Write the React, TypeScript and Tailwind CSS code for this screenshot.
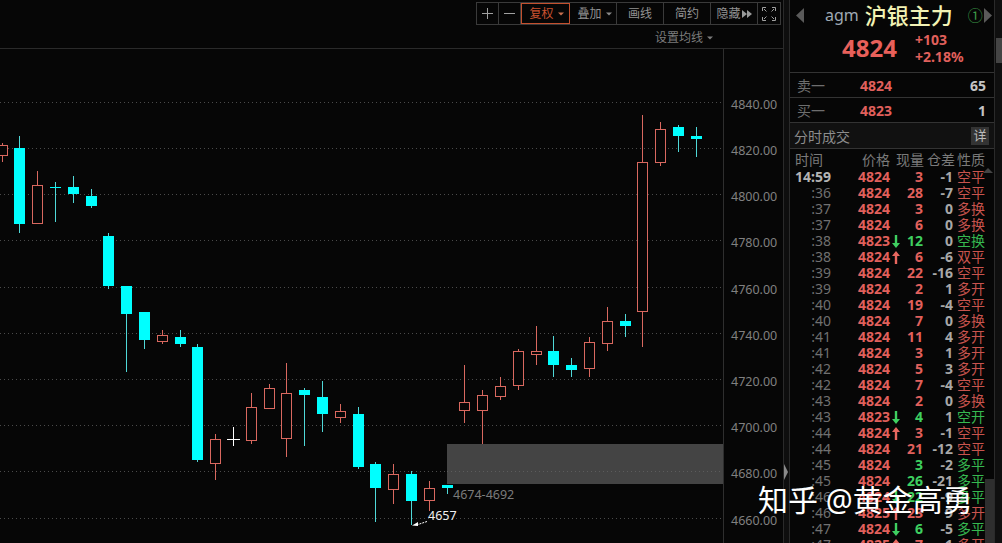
import React from "react";

// [x, open-top y, body-bottom y, wick-top y, wick-bottom y, colour]
type Candle = [number, number, number, number, number, "r" | "c"];

const candles: Candle[] = [
  [2.5, 145, 155, 143, 162, "r"],
  [19.5, 148, 224, 136, 233, "c"],
  [37.5, 185, 223, 171, 224, "r"],
  [55.5, 187, 188, 182, 222, "c"],
  [73.5, 187, 194, 176, 203, "c"],
  [91.5, 196, 206, 189, 208, "c"],
  [108.5, 236, 286, 233, 289, "c"],
  [126.5, 286, 314, 286, 372, "c"],
  [144.5, 312, 340, 312, 349, "c"],
  [162.5, 335, 341, 330, 344, "r"],
  [180.5, 337, 344, 330, 347, "c"],
  [197.5, 347, 460, 344, 462, "c"],
  [215.5, 439, 463, 434, 480, "r"],
  [251.5, 407, 440, 393, 444, "r"],
  [269.5, 388, 408, 384, 408, "r"],
  [286.5, 393, 438, 363, 457, "r"],
  [304.5, 390, 395, 388, 446, "c"],
  [322.5, 397, 414, 381, 432, "c"],
  [340.5, 411, 417, 404, 423, "r"],
  [358.5, 414, 467, 407, 469, "c"],
  [375.5, 464, 488, 462, 522, "c"],
  [393.5, 474, 489, 464, 504, "r"],
  [411.5, 474, 501, 471, 525, "c"],
  [429.5, 488, 500, 481, 511, "r"],
  [447.5, 485, 488, 485, 494, "c"],
  [464.5, 402, 410, 365, 423, "r"],
  [482.5, 395, 410, 390, 444, "r"],
  [500.5, 386, 396, 377, 400, "r"],
  [518.5, 351, 385, 349, 390, "r"],
  [536.5, 351, 354, 326, 365, "r"],
  [553.5, 351, 365, 336, 377, "c"],
  [571.5, 365, 370, 358, 377, "c"],
  [589.5, 342, 368, 337, 377, "r"],
  [607.5, 321, 343, 307, 351, "r"],
  [625.5, 321, 326, 314, 337, "c"],
  [642.5, 162, 311, 115, 347, "r"],
  [660.5, 129, 162, 122, 166, "r"],
  [678.5, 127, 136, 125, 152, "c"],
  [696.5, 136, 139, 127, 157, "c"],
];

const gridYs = [102.5, 148.5, 194.5, 240.5, 287.5, 333.5, 379.5, 425.5, 471.5, 518.5];
const axisLabels = ["4840.00", "4820.00", "4800.00", "4780.00", "4760.00", "4740.00", "4720.00", "4700.00", "4680.00", "4660.00"];

// time, price, arrow, qty, diff, type, green?
type Trade = [string, string, "" | "u" | "d", string, string, string, boolean];

const trades: Trade[] = [
  ["14:59", "4824", "", "3", "-1", "空平", false],
  [":36", "4824", "", "28", "-7", "空平", false],
  [":37", "4824", "", "3", "0", "多换", false],
  [":37", "4824", "", "6", "0", "多换", false],
  [":38", "4823", "d", "12", "0", "空换", true],
  [":38", "4824", "u", "6", "-6", "双平", false],
  [":39", "4824", "", "22", "-16", "空平", false],
  [":39", "4824", "", "2", "1", "多开", false],
  [":40", "4824", "", "19", "-4", "空平", false],
  [":40", "4824", "", "7", "0", "多换", false],
  [":41", "4824", "", "11", "4", "多开", false],
  [":41", "4824", "", "3", "1", "多开", false],
  [":42", "4824", "", "5", "3", "多开", false],
  [":42", "4824", "", "7", "-4", "空平", false],
  [":43", "4824", "", "2", "0", "多换", false],
  [":43", "4823", "d", "4", "1", "空开", true],
  [":44", "4824", "u", "3", "-1", "空平", false],
  [":44", "4824", "", "21", "-12", "空平", false],
  [":45", "4824", "", "3", "-2", "多平", true],
  [":45", "4824", "", "26", "-21", "多平", true],
  [":46", "4824", "d", "22", "-9", "多平", true],
  [":46", "4825", "u", "23", "9", "多开", false],
  [":47", "4824", "d", "6", "-5", "多平", true],
  [":47", "4825", "u", "7", "1", "多开", false],
];

function Caret({ color = "#8a8a8a" }: { color?: string }) {
  return (
    <svg width="6" height="4" viewBox="0 0 6 4" className="ml-[4px]">
      <path d="M0 0.5h6L3 3.5z" fill={color} />
    </svg>
  );
}

function Toolbar() {
  const cell = "flex h-full items-center justify-center border-r border-[#3a3a3a] text-[12px] text-[#929292]";
  return (
    <div className="flex h-[26px] shrink-0 justify-end pt-[2px] pr-[2px]">
      <div className="flex h-[23px] border border-[#3a3a3a]">
        <div className={`${cell} w-[22px]`}>
          <svg width="11" height="11" viewBox="0 0 11 11"><path d="M5.5 0v11M0 5.5h11" stroke="#a0a0a0" /></svg>
        </div>
        <div className={`${cell} w-[22px]`}>
          <svg width="11" height="11" viewBox="0 0 11 11"><path d="M0 5.5h11" stroke="#a0a0a0" /></svg>
        </div>
        <div className="flex h-full w-[49px] items-center justify-center border border-[#c4502e] pl-[2px] text-[12px] text-[#c9512f]">
          复权
          <Caret color="#c9704f" />
        </div>
        <div className={`${cell} w-[47px] pl-[3px]`}>
          叠加
          <Caret />
        </div>
        <div className={`${cell} w-[47px]`}>画线</div>
        <div className={`${cell} w-[47px]`}>简约</div>
        <div className={`${cell} w-[47px]`}>
          隐藏
          <svg width="10" height="8" viewBox="0 0 10 8" className="ml-[1px]"><path d="M0 0l5 4-5 4zM5 0l5 4-5 4z" fill="#9a9a9a" /></svg>
        </div>
        <div className="flex h-full w-[22px] items-center justify-center">
          <svg width="14" height="14" viewBox="0 0 14 14" fill="none" stroke="#a0a0a0">
            <path d="M0.5 4V0.5H4M10 0.5h3.5V4M13.5 10v3.5H10M4 13.5H0.5V10M2 2l2.5 2.5M12 2L9.5 4.5M12 12L9.5 9.5M2 12l2.5-2.5" />
          </svg>
        </div>
      </div>
    </div>
  );
}

function Chart() {
  return (
    <svg viewBox="0 49 783 494" className="block h-[494px] w-[783px] shrink-0">
      {gridYs.map((y) => (
        <line key={y} x1="0" x2="723" y1={y} y2={y} stroke="#4a4a4a" strokeDasharray="1 3" />
      ))}
      <rect x="447" y="444" width="276" height="40" fill="#444444" />
      <line x1="447" x2="723" y1="471.5" y2="471.5" stroke="#5c5c5c" strokeDasharray="1 3" />
      <line x1="723.5" x2="723.5" y1="49" y2="543" stroke="#2e2e2e" />
      {candles.map(([x, top, bottom, high, low, c]) => {
        const color = c === "r" ? "#d9685f" : "#00ffff";
        return (
          <g key={x}>
            <line x1={x} x2={x} y1={high} y2={low} stroke={c === "r" ? "#d9685f" : "#4fd8d8"} />
            {c === "r" ? (
              <rect x={x - 5} y={top + 0.5} width="10" height={bottom - top} fill="#060606" stroke={color} />
            ) : (
              <rect x={x - 5.5} y={top} width="11" height={bottom - top} fill={color} />
            )}
          </g>
        );
      })}
      <path d="M233.5 427v19M227 439.5h13" stroke="#ffffff" />
      <path d="M427 521.5l-9 3" stroke="#ffffff" strokeDasharray="2 1" />
      <path d="M412 525.5l6-3.5v4z" fill="#ffffff" />
      <text x="453" y="499" fontSize="12.5" fill="#7b7b7b">4674-4692</text>
      <text x="428" y="520" fontSize="12.5" fill="#f0f0f0">4657</text>
      {axisLabels.map((label, i) => (
        <text key={label} x="731" y={gridYs[i] + 6.5} fontSize="12.5" fill="#808080">{label}</text>
      ))}
    </svg>
  );
}

function TradeArrow({ dir }: { dir: "u" | "d" }) {
  const color = dir === "u" ? "#e8675f" : "#3ecf60";
  return (
    <svg width="8" height="13" viewBox="0 0 8 13" className={dir === "u" ? "" : "rotate-180"}>
      <path d="M4 0L8 5H5.2V13H2.8V5H0z" fill={color} />
    </svg>
  );
}

function TradeRow({ t, first }: { t: Trade; first: boolean }) {
  const [time, price, arrow, qty, diff, kind, green] = t;
  return (
    <div className="grid h-[16px] grid-cols-[41px_59px_11px_22px_30px_1fr] items-center text-[14px] leading-[16px] font-bold">
      <span className={`text-right whitespace-nowrap ${first ? "text-[#b4b4b4]" : "font-normal text-[#707070]"}`}>{time}</span>
      <span className="text-right text-[#e0605c]">{price}</span>
      <span className="flex justify-center">{arrow && <TradeArrow dir={arrow} />}</span>
      <span className={`justify-self-end ${green ? "text-[#3ecf60]" : "text-[#e0605c]"}`}>{qty}</span>
      <span className="justify-self-end text-[#a8a8a8]">{diff}</span>
      <span className={`pl-[4px] font-normal ${green ? "text-[#36b850]" : "text-[#c8544e]"}`}>{kind}</span>
    </div>
  );
}

function QuoteRow({ label, price, size }: { label: string; price: string; size: string }) {
  return (
    <div className="flex h-[25px] shrink-0 items-center border-b border-[#333333] pr-[8px] pl-[7px] text-[14px]">
      <span className="w-[63px] text-[#6e6e6e]">{label}</span>
      <span className="font-bold text-[#e0605c]">{price}</span>
      <span className="ml-auto font-bold text-[#c4c4c4]">{size}</span>
    </div>
  );
}

function SidePanel() {
  return (
    <div className="flex h-full w-[212px] overflow-hidden">
      <div className="flex w-[205px] flex-col border-r border-[#2a2a2a]">
        <div className="h-[73px] shrink-0 border-b border-[#333333]">
          <div className="flex h-[30px] items-center pl-[6px]">
            <svg width="8" height="15" viewBox="0 0 8 15"><path d="M8 0v15L0 7.5z" fill="#5a5a5a" /></svg>
            <span className="ml-[21px] text-[16px] text-[#9fa9b3]">agm</span>
            <span className="ml-[6px] text-[22px] leading-none font-medium text-[#f2f2b4]">沪银主力</span>
            <span className="ml-[15px] text-[15px] leading-none text-[#3c9a46]">①</span>
            <svg width="8" height="15" viewBox="0 0 8 15" className="ml-[1px]"><path d="M0 0v15l8-7.5z" fill="#5a5a5a" /></svg>
          </div>
          <div className="flex items-center pl-[52px]">
            <span className="text-[24px] leading-[36px] font-bold text-[#e8605a]">4824</span>
            <div className="ml-[18px] flex flex-col text-[14px] leading-[17px] font-bold text-[#e0605c]">
              <span>+103</span>
              <span>+2.18%</span>
            </div>
          </div>
        </div>
        <QuoteRow label="卖一" price="4824" size="65" />
        <QuoteRow label="买一" price="4823" size="1" />
        <div className="flex h-[26px] shrink-0 items-center justify-between border-b border-[#333333] bg-[#111111] pt-[1px] pr-[5px] pl-[4px] text-[14px] text-[#8c8c8c]">
          <span>分时成交</span>
          <span className="flex h-[18px] w-[18px] items-center justify-center bg-[#333333] text-[13px] text-[#bbbbbb]">详</span>
        </div>
        <div className="relative min-h-0 flex-1 overflow-hidden">
          <div className="flex h-[20px] items-center pt-[2px] pl-[5px] text-[14px] leading-none text-[#7a7a7a]">
            <span className="w-[67px]">时间</span>
            <span className="w-[34px]">价格</span>
            <span className="w-[31px]">现量</span>
            <span className="w-[30px]">仓差</span>
            <span>性质</span>
          </div>
          {trades.map((t, i) => (
            <TradeRow key={i} t={t} first={i === 0} />
          ))}
          <svg width="10" height="5" viewBox="0 0 10 5" className="absolute top-[19px] right-[1px]"><path d="M0 5L5 0l5 5z" fill="#444444" /></svg>
          <div className="absolute top-[330px] right-0 bottom-0 w-[9px] bg-[#2e2e2e]" />
        </div>
      </div>
      <div className="flex flex-1 flex-col bg-[#0f0f0f] pt-[38px] pl-[1px]">
        <div className="h-[25px] bg-[#444444]" />
      </div>
    </div>
  );
}

export default function App() {
  return (
    <div className="relative flex h-[543px] w-[1002px] overflow-hidden bg-[#060606] font-['Noto_Sans','Noto_Sans_CJK_SC',sans-serif]">
      <div className="flex w-[783px] flex-col">
        <Toolbar />
        <div className="flex h-[23px] shrink-0 items-center justify-end border-b border-[#2a2a2a] pt-[2px] pr-[70px] text-[12px] text-[#7c7c7c]">
          设置均线
          <Caret color="#7c7c7c" />
        </div>
        <Chart />
      </div>
      {/* splitter */}
      <div className="relative w-[7px] border-x border-[#2a2a2a] bg-[#0e0e0e]">
        <svg width="5" height="16" viewBox="0 0 5 16" className="absolute top-[464px] left-0">
          <path d="M0 0l4 8-4 8z" fill="#8a8a8a" />
        </svg>
      </div>
      <SidePanel />
      <div className="absolute top-[481px] left-[758px] text-[30px] leading-[38px] whitespace-nowrap text-white">知乎 @黄金高勇</div>
    </div>
  );
}
